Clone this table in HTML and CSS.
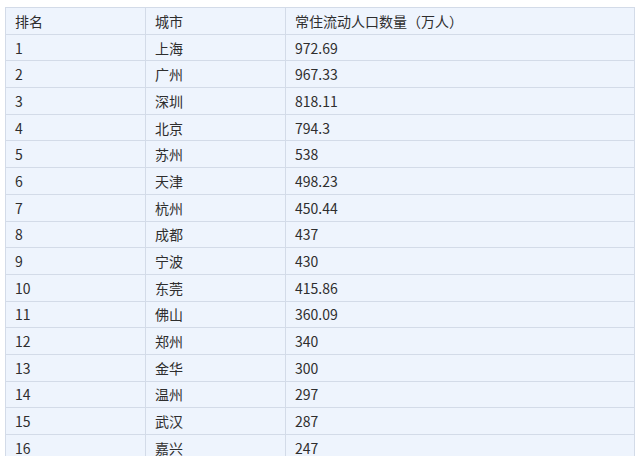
FILE: index.html
```html
<!DOCTYPE html>
<html lang="zh-CN">
<head>
<meta charset="utf-8">
<link rel="stylesheet" href="styles.css">
</head>
<body>
<div class="wrap">
<table class="data">
<colgroup><col class="c1"><col class="c2"><col class="c3"></colgroup>
<tr><td>排名</td><td>城市</td><td>常住流动人口数量（万人）</td></tr>
<tr><td>1</td><td>上海</td><td>972.69</td></tr>
<tr><td>2</td><td>广州</td><td>967.33</td></tr>
<tr><td>3</td><td>深圳</td><td>818.11</td></tr>
<tr><td>4</td><td>北京</td><td>794.3</td></tr>
<tr><td>5</td><td>苏州</td><td>538</td></tr>
<tr><td>6</td><td>天津</td><td>498.23</td></tr>
<tr><td>7</td><td>杭州</td><td>450.44</td></tr>
<tr><td>8</td><td>成都</td><td>437</td></tr>
<tr><td>9</td><td>宁波</td><td>430</td></tr>
<tr><td>10</td><td>东莞</td><td>415.86</td></tr>
<tr><td>11</td><td>佛山</td><td>360.09</td></tr>
<tr><td>12</td><td>郑州</td><td>340</td></tr>
<tr><td>13</td><td>金华</td><td>300</td></tr>
<tr><td>14</td><td>温州</td><td>297</td></tr>
<tr><td>15</td><td>武汉</td><td>287</td></tr>
<tr><td>16</td><td>嘉兴</td><td>247</td></tr>
</table>
</div>
</body>
</html>
```

FILE: styles.css
```css
html, body {
  margin: 0;
  padding: 0;
  background: #ffffff;
}
.wrap {
  padding: 7px 6px 0 5px;
}
.data {
  border-collapse: collapse;
  table-layout: fixed;
  width: 629px;
  font-family: "Noto Sans CJK SC", "Noto Sans", sans-serif;
  font-size: 14px;
  color: #2e2e2e;
}
.c1 { width: 140px; }
.c2 { width: 140px; }
.c3 { width: 349px; }
.data td {
  background: #eef4fd;
  border: 1px solid #d3dbe8;
  height: 25.7px;
  padding: 0 0 0 9px;
  line-height: 20px;
  vertical-align: middle;
  white-space: nowrap;
}
```
